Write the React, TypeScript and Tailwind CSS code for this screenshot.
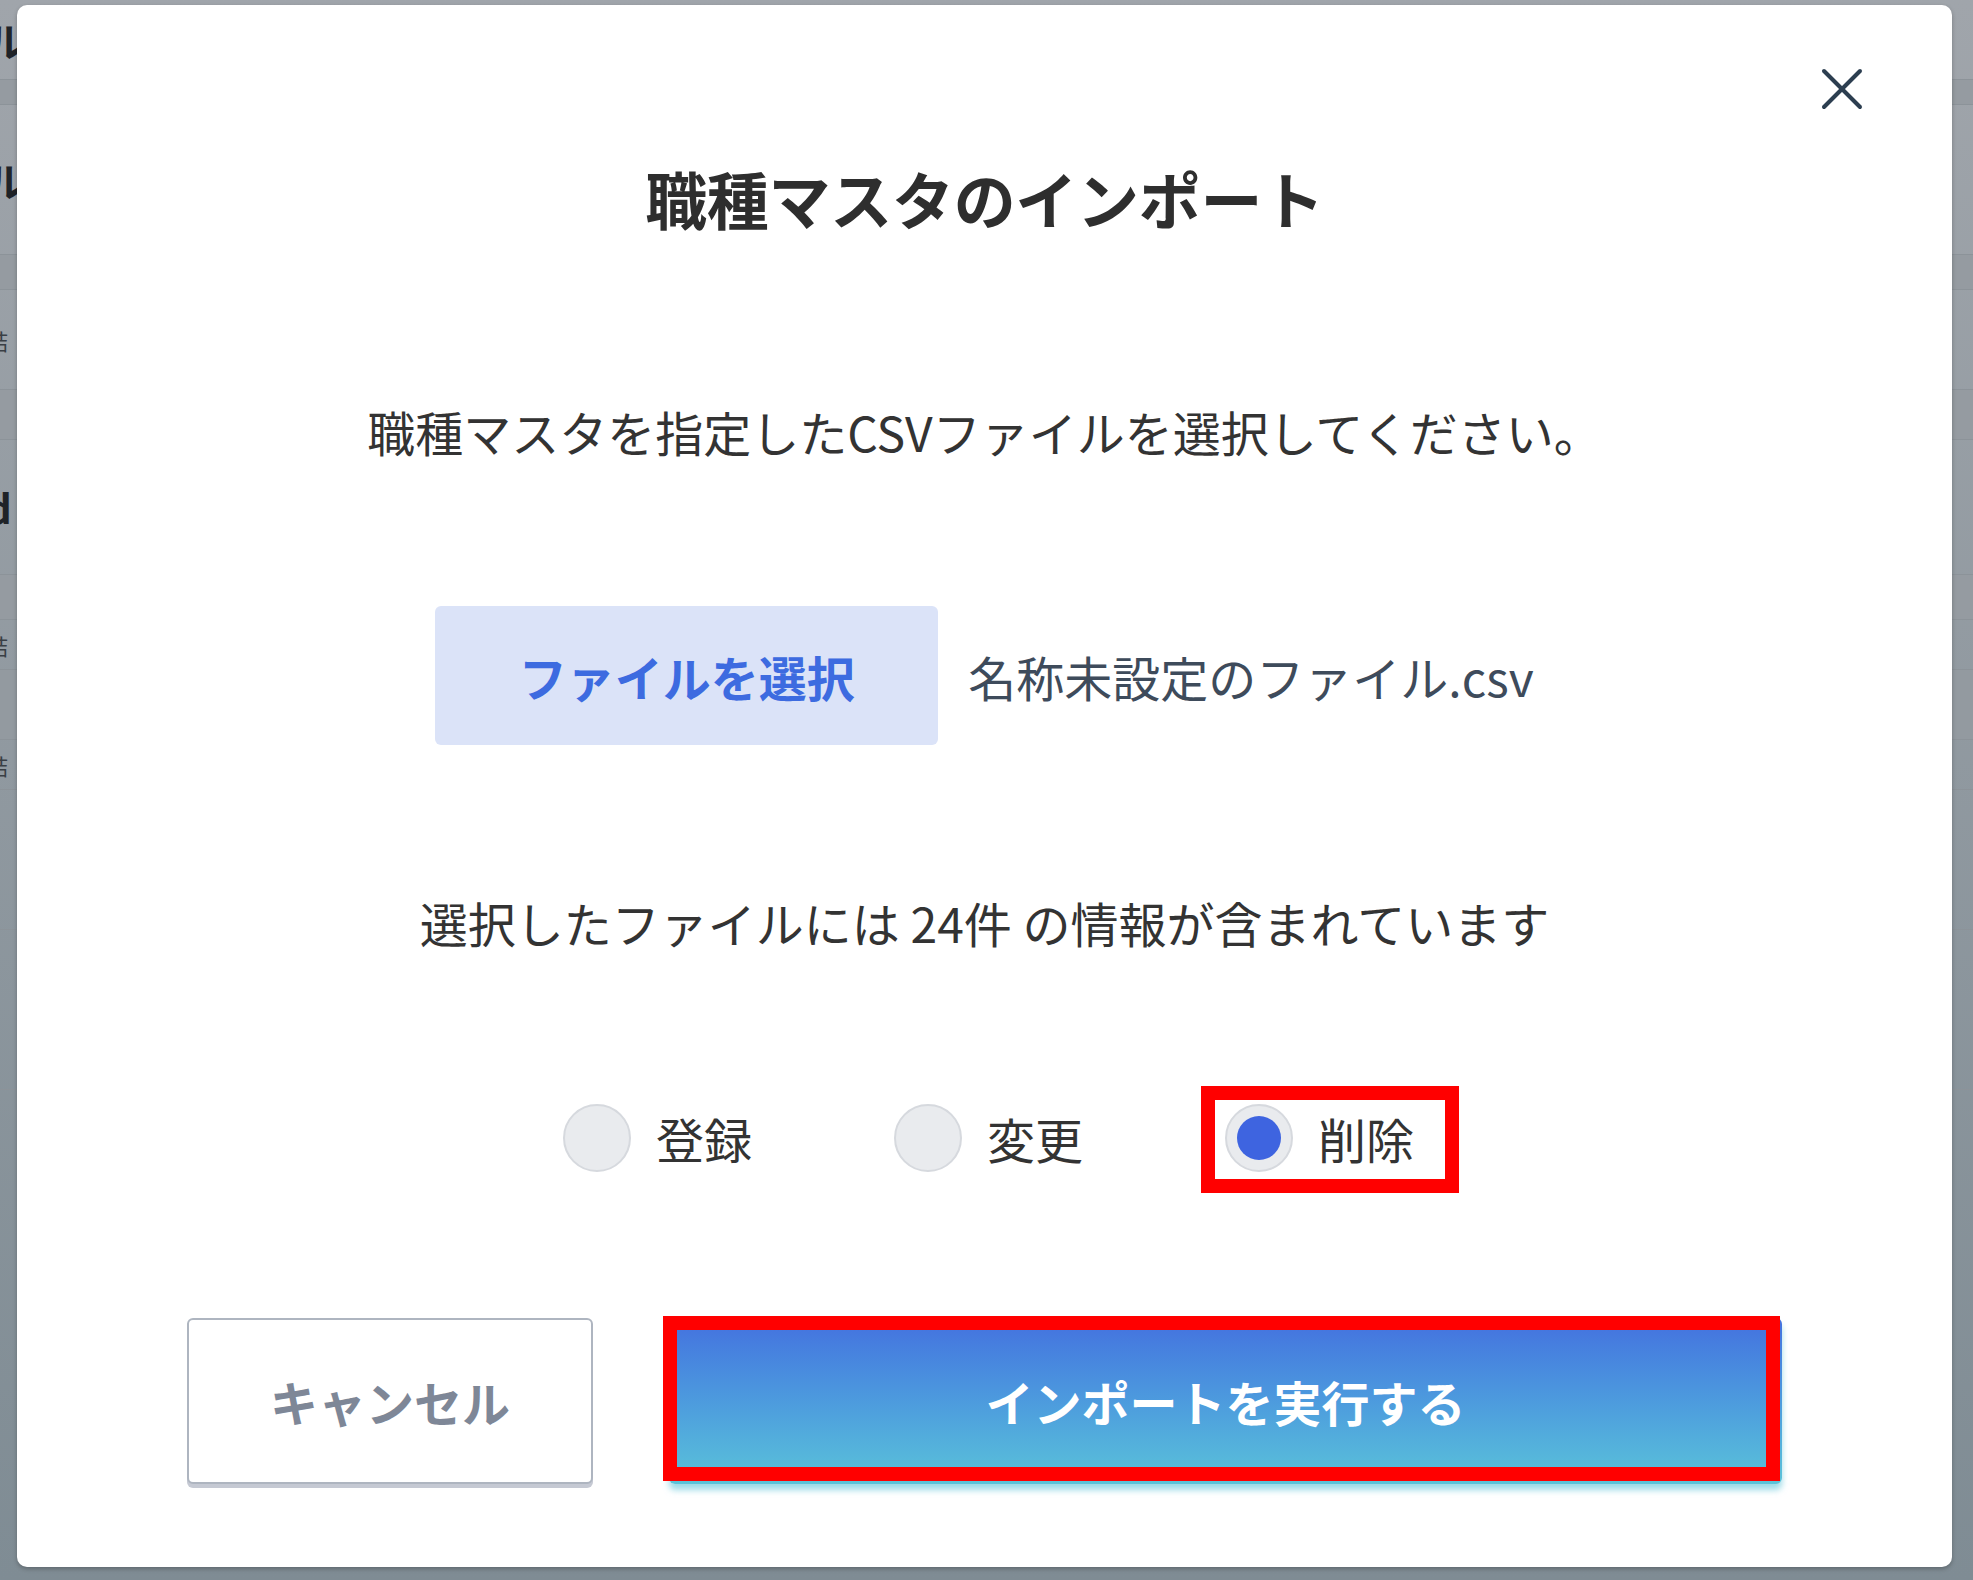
import { useState } from 'react';

const rows = [
  { h: 'h-[80px]', mark: 'ル', cls: 'text-[40px] font-bold text-[#1f2328]' },
  { h: 'h-[25px]', mark: '', cls: 'bg-[#959ba1]' },
  { h: 'h-[150px]', mark: 'ル', cls: 'text-[40px] font-bold text-[#1f2328]' },
  { h: 'h-[35px]', mark: '', cls: 'bg-[#959ba1]' },
  { h: 'h-[100px]', mark: '詰', cls: 'text-[22px] text-[#3a3f45]' },
  { h: 'h-[50px]', mark: '', cls: 'bg-[#959ba1]' },
  { h: 'h-[135px]', mark: 'd', cls: 'text-[40px] font-bold text-[#1f2328]' },
  { h: 'h-[45px]', mark: '', cls: 'bg-[#959ba1]' },
  { h: 'h-[50px]', mark: '詰', cls: 'text-[22px] text-[#3a3f45]' },
  { h: 'h-[70px]', mark: '', cls: 'bg-[#939aa0]' },
  { h: 'h-[50px]', mark: '詰', cls: 'text-[22px] text-[#3a3f45]' },
  { h: 'h-[140px]', mark: '', cls: '' },
  { h: 'h-[160px]', mark: '', cls: '' },
];

const options = ['登録', '変更', '削除'];

export default function App() {
  const [mode, setMode] = useState('削除');

  return (
    <div className="relative w-[1973px] h-[1580px] overflow-hidden bg-gradient-to-b from-[#a0a5ab] to-[#7f8c94] font-['Noto_Sans_CJK_JP','Noto_Sans',sans-serif]">
      {/* page behind the overlay */}
      <div className="flex flex-col">
        {rows.map((r, i) => (
          <div key={i} className={`${r.h} ${r.cls} flex items-center border-b border-[#8c9399] overflow-hidden`}>
            {r.mark && <span className="-ml-[14px] leading-none">{r.mark}</span>}
          </div>
        ))}
      </div>

      {/* modal */}
      <div className="absolute left-[17px] top-[5px] w-[1935px] h-[1562px] bg-white rounded-[10px] shadow-[0_2px_4px_rgba(0,0,0,0.25)] flex flex-col items-center">
        <button className="absolute right-[89px] top-[63px] w-[42px] h-[42px] flex items-center justify-center">
          <svg width="42" height="42" viewBox="0 0 42 42" fill="none" stroke="#2c3e50" strokeWidth="4" strokeLinecap="round">
            <path d="M3 3 39 39" />
            <path d="M39 3 3 39" />
          </svg>
        </button>

        <h2 className="mt-[162px] text-[62px] leading-none font-bold text-[#2e2e2e] tracking-[-0.3px]">職種マスタのインポート</h2>

        <p className="mt-[178px] text-[48px] leading-none text-[#333]">職種マスタを指定したCSVファイルを選択してください。</p>

        <div className="mt-[151px] flex items-center gap-[30px]">
          <button className="w-[503px] h-[139px] rounded-[6px] bg-[#dbe3f8] text-[48px] font-bold text-[#3d6be0] leading-none">
            ファイルを選択
          </button>
          <span className="text-[48px] leading-none text-[#3e4b5b]">名称未設定のファイル.csv</span>
        </div>

        <p className="mt-[153px] text-[48px] leading-none text-[#333]">選択したファイルには 24件 の情報が含まれています</p>

        <div className="mt-[158px] ml-[8px] flex items-center gap-[142px]">
          {options.map((o) => {
            const on = mode === o;
            return (
              <label key={o} onClick={() => setMode(o)} className="relative flex items-center gap-[25px] cursor-pointer">
                <span className="w-[68px] h-[68px] rounded-full bg-[#e9ebee] border-2 border-[#d6d9de] flex items-center justify-center">
                  {on && <span className="w-[44px] h-[44px] rounded-full bg-[#3e64e0]" />}
                </span>
                <span className="text-[48px] leading-none text-[#333]">{o}</span>
                {on && <span className="absolute -left-[24px] -right-[45px] -top-[18px] -bottom-[21px] border-[14px] border-[#ff0000]" />}
              </label>
            );
          })}
        </div>

        <div className="mt-[146px] flex items-start gap-[76px]">
          <button className="w-[406px] h-[166px] rounded-[6px] border-2 border-[#aeb5c0] bg-white shadow-[0_4px_0_#c5c9d3] text-[48px] font-bold text-[#7e8797] leading-none">
            キャンセル
          </button>
          <div className="relative">
            <button className="w-[1113px] h-[166px] rounded-[6px] bg-gradient-to-b from-[#4470df] to-[#5bc3d9] shadow-[0_6px_6px_rgba(91,195,217,0.6)] text-[48px] font-bold text-white leading-none">
              インポートを実行する
            </button>
            <span className="absolute -left-[6px] right-[2px] -top-[2px] bottom-[3px] border-[14px] border-[#ff0000]" />
          </div>
        </div>
      </div>
    </div>
  );
}
